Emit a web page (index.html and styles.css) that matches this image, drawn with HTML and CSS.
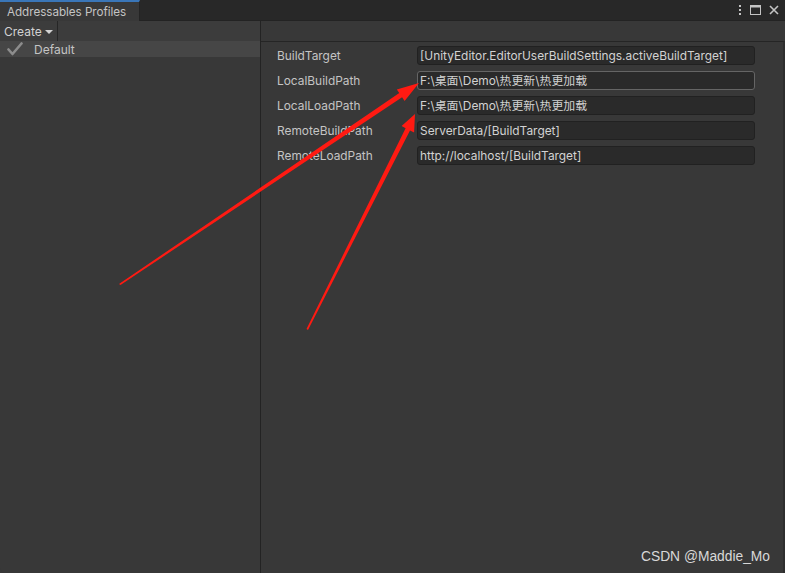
FILE: index.html
```html
<!DOCTYPE html>
<html>
<head>
<meta charset="utf-8">
<link rel="stylesheet" href="styles.css">
</head>
<body>
<div class="window">
  <div class="tabbar">
    <div class="tab">Addressables Profiles</div>
    <div class="tab-icons">
      <svg width="4" height="12" viewBox="0 0 4 12"><rect x="1" y="1" width="2" height="2" fill="#c4c4c4"/><rect x="1" y="5" width="2" height="2" fill="#c4c4c4"/><rect x="1" y="9" width="2" height="2" fill="#c4c4c4"/></svg>
      <svg width="11" height="10" viewBox="0 0 11 10"><rect x="0.5" y="0.5" width="10" height="9" fill="none" stroke="#c4c4c4"/><rect x="0.5" y="0.5" width="10" height="2" fill="#c4c4c4"/></svg>
      <svg width="10" height="10" viewBox="0 0 10 10"><path d="M1 1L9 9M9 1L1 9" stroke="#c4c4c4" stroke-width="1.6"/></svg>
    </div>
  </div>
  <div class="content">
    <div class="left">
      <div class="toolbar">
        <div class="create">Create <span class="caret"></span></div>
      </div>
      <div class="profile selected">
        <svg class="check" width="16" height="14" viewBox="0 0 16 14"><path d="M1.5 7.5L5.5 12L14.5 1.5" fill="none" stroke="#8c8c8c" stroke-width="2.6" stroke-linecap="round" stroke-linejoin="round"/></svg>
        <span>Default</span>
      </div>
    </div>
    <div class="right">
      <div class="rows">
        <div class="row"><span class="label">BuildTarget</span><div class="field">[UnityEditor.EditorUserBuildSettings.activeBuildTarget]</div></div>
        <div class="row"><span class="label">LocalBuildPath</span><div class="field hover">F:\桌面\Demo\热更新\热更加载</div></div>
        <div class="row"><span class="label">LocalLoadPath</span><div class="field">F:\桌面\Demo\热更新\热更加载</div></div>
        <div class="row"><span class="label">RemoteBuildPath</span><div class="field">ServerData/[BuildTarget]</div></div>
        <div class="row"><span class="label">RemoteLoadPath</span><div class="field">http://localhost/[BuildTarget]</div></div>
      </div>
    </div>
  </div>
  <svg class="arrows" width="785" height="573" viewBox="0 0 785 573">
    <polygon fill="#ff1a12" points="119,284 399.3,93.1 396.8,89.4 419,83 404.6,101 402.1,97.3 120.5,285"/>
    <polygon fill="#ff1a12" points="306.5,329 405.6,128.2 401.6,126.1 415,114 414.1,132.4 410,130.4 308,330"/>
  </svg>
  <div class="watermark">CSDN @Maddie_Mo</div>
</div>
</body>
</html>
```
FILE: styles.css
```css
* { box-sizing: border-box; }
html, body { margin: 0; padding: 0; }
body {
  width: 785px;
  height: 573px;
  overflow: hidden;
  background: #383838;
  font-family: Inter, "Noto Sans CJK SC", sans-serif;
  font-size: 12px;
}
.window {
  position: relative;
  width: 785px;
  height: 573px;
  display: flex;
  flex-direction: column;
  background: #383838;
  border-bottom-left-radius: 5px;
  overflow: hidden;
}
.tabbar {
  height: 21px;
  flex: none;
  display: flex;
  align-items: stretch;
  justify-content: space-between;
  background: #282828;
  border-bottom: 1px solid #232323;
}
.tab {
  width: 140px;
  background: #383838;
  border-top: 2px solid #3a76b8;
  border-right: 1px solid #242424;
  color: #c4c4c4;
  padding: 2px 0 0 7px;
  font-size: 11.7px;
  letter-spacing: -0.05px;
  line-height: 16px;
  margin-bottom: -1px;
}
.tab-icons {
  display: flex;
  align-items: center;
  gap: 8px;
  padding: 0 6px 0 0;
}
.tab-icons svg { display: block; }
.content {
  flex: 1;
  display: flex;
}
.left {
  width: 261px;
  flex: none;
  border-right: 1px solid #232323;
  display: flex;
  flex-direction: column;
}
.toolbar {
  height: 20px;
  display: flex;
  background: #3c3c3c;
}
.create {
  width: 58px;
  padding: 0 0 0 4px;
  color: #d2d2d2;
  line-height: 19px;
  font-size: 12px;
  border-right: 1px solid #262626;
  background: #3c3c3c;
  display: flex;
  align-items: center;
  gap: 3px;
}
.caret {
  display: inline-block;
  width: 0;
  height: 0;
  border-left: 4px solid transparent;
  border-right: 4px solid transparent;
  border-top: 4px solid #d2d2d2;
  margin-top: 1px;
}
.profile {
  height: 16px;
  display: flex;
  align-items: center;
  color: #c4c4c4;
  font-size: 12px;
  padding-left: 7px;
  gap: 11px;
}
.profile.selected { background: #464646; }
.check { display: block; }
.right {
  flex: 1;
  border-top: 1px solid #252525;
  margin-top: 20px;
  border-right: 2px solid #2e2e2e;
}
.rows {
  padding: 4px 28px 0 16px;
  display: flex;
  flex-direction: column;
  gap: 6px;
}
.row {
  height: 19px;
  display: flex;
  align-items: center;
}
.label {
  width: 140px;
  color: #c4c4c4;
  font-size: 11.9px;
}
.field {
  flex: 1;
  height: 19px;
  background: #2a2a2a;
  border: 1px solid #212121;
  border-radius: 3px;
  color: #d2d2d2;
  font-size: 11.9px;
  line-height: 17px;
  padding-left: 2px;
  white-space: nowrap;
  overflow: hidden;
}
.field.hover { border-color: #656565; }
.arrows {
  position: absolute;
  left: 0;
  top: 0;
  pointer-events: none;
}
.watermark {
  position: absolute;
  right: 15px;
  bottom: 9px;
  color: #d8d8d8;
  font-family: "Liberation Sans", sans-serif;
  font-size: 13.8px;
}
```
